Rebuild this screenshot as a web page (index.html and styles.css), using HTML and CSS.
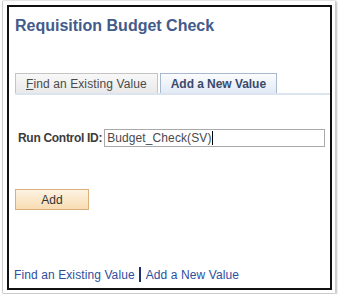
FILE: index.html
```html
<!DOCTYPE html>
<html>
<head>
    <title>Requisition Budget Check</title>
    <link rel="stylesheet" href="styles.css">
</head>
<body>
    <div class="outer">
        <div class="inner">
            <h1 class="title">Requisition Budget Check</h1>

            <div class="tabs">
                <div class="tab"><u>F</u>ind an Existing Value</div>
                <div class="tab active">Add a New Value</div>
            </div>

            <div class="field-row">
                <span class="field-label">Run Control ID:</span>
                <div class="field-input">Budget_Check(SV)<span class="caret"></span></div>
            </div>

            <button class="add-btn" type="button">Add</button>

            <div class="links">
                <a href="#">Find an Existing Value</a>
                <span class="sep"></span>
                <a href="#">Add a New Value</a>
            </div>
        </div>
    </div>
</body>
</html>
```

FILE: styles.css
```css
body {
    margin: 0;
    background-color: #ffffff;
    font-family: "Liberation Sans", Arial, sans-serif;
    font-size: 12px;
}
.outer {
    width: 332px;
    height: 292px;
    margin-left: 2px;
    border: 1px solid #cccccc;
    border-top-color: #e4e4e4;
    border-radius: 2px;
    box-shadow: 1px 1px 2px rgba(0, 0, 0, 0.25);
}
.inner {
    width: 321px;
    height: 281px;
    margin: 4px 0 0 4px;
    border: 2px solid #111111;
    display: flex;
    flex-direction: column;
    align-items: flex-start;
}
.title {
    margin: 9px 0 0 6px;
    font-size: 16px;
    line-height: 19px;
    font-weight: bold;
    color: #435b8b;
}
.tabs {
    align-self: stretch;
    display: flex;
    gap: 2px;
    margin: 38px 0 0 6px;
    border-bottom: 2px solid #dbe4ef;
}
.tab {
    height: 19px;
    line-height: 20px;
    padding: 0 10px;
    border: 1px solid #c4c4c4;
    border-bottom: none;
    background: linear-gradient(#f8f8f8, #e9e9e9);
    color: #4a4a4a;
    letter-spacing: 0.1px;
}
.tab u {
    text-decoration-color: #4a4a4a;
}
.tab.active {
    border-color: #a9b9cd;
    background: linear-gradient(#fbfcfe, #e2eaf5);
    color: #3b4a6a;
    font-weight: bold;
    letter-spacing: -0.05px;
}
.field-row {
    display: flex;
    align-items: center;
    gap: 2px;
    margin: 34px 0 0 9px;
}
.field-label {
    font-weight: bold;
    color: #3c3c3c;
    letter-spacing: -0.3px;
}
.field-input {
    width: 221px;
    height: 18px;
    box-sizing: border-box;
    padding-left: 2px;
    border: 1px solid #a9a9a9;
    line-height: 16px;
    color: #4a4a4a;
    letter-spacing: 0.1px;
    display: flex;
    align-items: center;
}
.caret {
    width: 1px;
    height: 14px;
    margin-left: 1px;
    background-color: #000000;
}
.add-btn {
    width: 74px;
    height: 21px;
    margin: 42px 0 0 6px;
    padding: 0;
    border: 1px solid #dcae7a;
    background: linear-gradient(#fdf3e3, #f8dcb2);
    font-family: "Liberation Sans", Arial, sans-serif;
    font-size: 12px;
    color: #333333;
}
.links {
    display: flex;
    align-items: center;
    margin: 57px 0 0 5px;
    line-height: 14px;
    letter-spacing: 0.1px;
}
.links a {
    color: #2d4f9e;
    text-decoration: none;
}
.sep {
    width: 2px;
    height: 15px;
    margin: 0 5px 0 4px;
    background-color: #1f2f6a;
}
```
